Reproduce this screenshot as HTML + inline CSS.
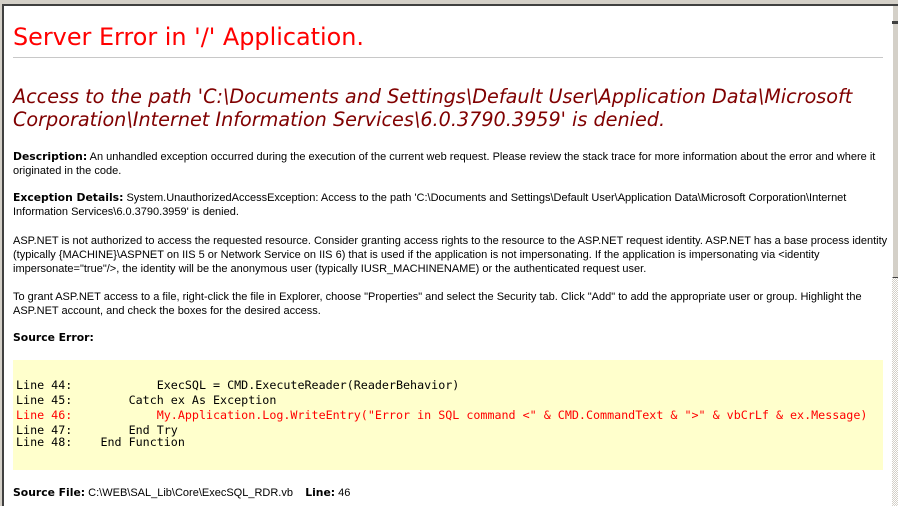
<!DOCTYPE html>
<html><head><meta charset="utf-8"><style>
html,body{margin:0;padding:0;width:898px;height:506px;overflow:hidden;background:#fff;position:relative}
.f{position:absolute}
.t{font-family:"Liberation Sans",Arial,sans-serif;font-size:11px;line-height:14px;color:#000;left:13px;white-space:nowrap}
.t b{font-family:"DejaVu Sans",Verdana,sans-serif;font-size:10.8px}
pre{margin:0;font-family:"DejaVu Sans Mono",monospace;font-size:11.7px;white-space:pre;position:absolute;left:16px}
</style></head><body>
<div class="f" style="left:0;top:0;width:898px;height:4px;background:#d4d0c8"></div>
<div class="f" style="left:0;top:4px;width:898px;height:2px;background:#404040"></div>
<div class="f" style="left:0;top:0;width:2px;height:506px;background:#d4d0c8"></div>
<div class="f" style="left:2px;top:4px;width:2px;height:502px;background:#404040"></div>
<div class="f" style="left:892px;top:6px;width:6px;height:500px;background:repeating-conic-gradient(#d4d0c8 0 25%,#fff 0 50%) 0 0/2px 2px"></div>
<div class="f" style="left:892px;top:6px;width:6px;height:15px;background:#d4d0c8;border-left:1px solid #fff;box-sizing:border-box"></div>
<div class="f" style="left:892px;top:21px;width:6px;height:3px;background:#404040"></div>
<div class="f" style="left:892px;top:24px;width:6px;height:254px;background:#d4d0c8;border-left:1px solid #fff;border-bottom:1px solid #404040;box-sizing:border-box"></div>

<div class="f" style="left:13px;top:21px;font-family:'DejaVu Sans',Verdana,sans-serif;font-size:23.9px;color:#f00;white-space:nowrap;line-height:32px">Server Error in '/' Application.</div>
<div class="f" style="left:13px;top:57px;width:870px;height:1px;background:#c8c8c8"></div>
<div class="f" style="left:13px;top:85px;font-family:'DejaVu Sans',Verdana,sans-serif;font-style:italic;font-size:19.2px;line-height:23px;color:#800000;white-space:nowrap">Access to the path 'C:\Documents and Settings\Default User\Application Data\Microsoft<br>Corporation\Internet Information Services\6.0.3790.3959' is denied.</div>

<div class="f t" style="top:150px"><b>Description:</b> An unhandled exception occurred during the execution of the current web request. Please review the stack trace for more information about the error and where it<br>originated in the code.</div>
<div class="f t" style="top:191px"><b>Exception Details:</b> System.UnauthorizedAccessException: Access to the path 'C:\Documents and Settings\Default User\Application Data\Microsoft Corporation\Internet<br>Information Services\6.0.3790.3959' is denied.</div>
<div class="f t" style="top:234px">ASP.NET is not authorized to access the requested resource. Consider granting access rights to the resource to the ASP.NET request identity. ASP.NET has a base process identity<br>(typically {MACHINE}\ASPNET on IIS 5 or Network Service on IIS 6) that is used if the application is not impersonating. If the application is impersonating via &lt;identity<br>impersonate="true"/&gt;, the identity will be the anonymous user (typically IUSR_MACHINENAME) or the authenticated request user.</div>
<div class="f t" style="top:290px">To grant ASP.NET access to a file, right-click the file in Explorer, choose "Properties" and select the Security tab. Click "Add" to add the appropriate user or group. Highlight the<br>ASP.NET account, and check the boxes for the desired access.</div>
<div class="f t" style="top:331px"><b>Source Error:</b></div>

<div class="f" style="left:13px;top:360px;width:870px;height:110px;background:#ffffcc"></div>
<pre style="top:378px">Line 44:            ExecSQL = CMD.ExecuteReader(ReaderBehavior)</pre>
<pre style="top:393px">Line 45:        Catch ex As Exception</pre>
<pre style="top:408px;color:#f00">Line 46:            My.Application.Log.WriteEntry("Error in SQL command &lt;" &amp; CMD.CommandText &amp; "&gt;" &amp; vbCrLf &amp; ex.Message)</pre>
<pre style="top:423px">Line 47:        End Try</pre>
<pre style="top:435px">Line 48:    End Function</pre>

<div class="f t" style="top:486px"><b>Source File:</b> C:\WEB\SAL_Lib\Core\ExecSQL_RDR.vb &nbsp;&nbsp;&nbsp;<b>Line:</b> 46</div>
</body></html>
